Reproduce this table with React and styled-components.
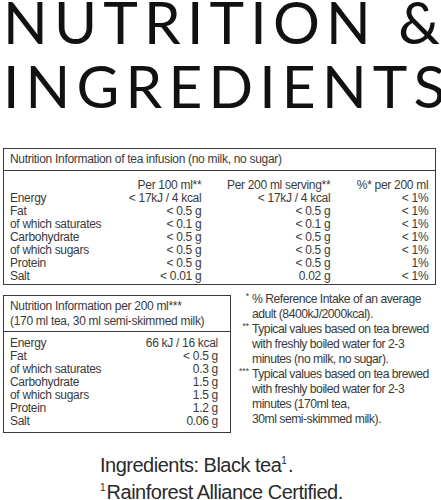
import React from "react";
import styled, { createGlobalStyle } from "styled-components";

const Global = createGlobalStyle`
  html, body { margin: 0; padding: 0; background: #fff; }
  body { font-family: "Liberation Sans", Arial, sans-serif; color: #2b2b2b; }
`;

const Page = styled.div`
  width: 441px;
  height: 500px;
  overflow: hidden;
  box-sizing: border-box;
  padding: 0 3px;
`;

const Title = styled.h1`
  margin: -11px 0 0;
  font-family: Lato, "Open Sans", sans-serif;
  font-weight: 400;
  font-size: 58.6px;
  line-height: 64px;
  color: #111;
  white-space: nowrap;
`;

const TitleLine = styled.span`
  display: block;
  width: max-content;
  letter-spacing: ${(p) => p.$ls}px;
  margin-right: -${(p) => p.$ls}px;
`;

const Box = styled.div`
  border: 1.5px solid #3a3a3a;
  box-sizing: border-box;
  flex: none;
  width: ${(p) => p.$w}px;
  margin-top: ${(p) => p.$mt}px;
  font-size: 12px;
  letter-spacing: -0.3px;
  color: #3a3a3a;
`;

const BoxHead = styled.div`
  border-bottom: 1.5px solid #3a3a3a;
  padding: ${(p) => p.$pad};
  line-height: ${(p) => p.$lh}px;
  white-space: nowrap;
`;

const Grid = styled.div`
  display: grid;
  grid-template-columns: ${(p) => p.$cols};
  padding: ${(p) => p.$pad};
  line-height: 13px;
`;

const Cell = styled.div`
  text-align: ${(p) => (p.$right ? "right" : "left")};
  white-space: nowrap;
`;

const Lower = styled.div`
  display: flex;
  align-items: flex-start;
  margin-top: 10px;
`;

const Notes = styled.div`
  flex: 1;
  margin-top: -3px;
  padding-left: 4px;
  font-size: 12.2px;
  letter-spacing: -0.5px;
  line-height: 15px;
  color: #3a3a3a;
`;

const Note = styled.div`
  display: grid;
  grid-template-columns: 14px 1fr;
  column-gap: 3px;
  white-space: nowrap;
`;

const Mark = styled.span`
  text-align: right;
  font-size: 8.5px;
  line-height: 15px;
  position: relative;
  top: -3px;
  letter-spacing: 0;
`;

const Ingredients = styled.div`
  margin-top: 19px;
  padding-left: 97px;
  font-size: 20px;
  line-height: 27px;
  color: #2a2a2a;
  letter-spacing: -0.5px;
`;

const Sup = styled.sup`
  font-size: 10px;
  vertical-align: 8px;
  line-height: 0;
  letter-spacing: 0;
  margin-right: 1px;
`;

const rows1 = [
  ["Energy", "< 17kJ / 4 kcal", "< 17kJ / 4 kcal", "< 1%"],
  ["Fat", "< 0.5 g", "< 0.5 g", "< 1%"],
  ["of which saturates", "< 0.1 g", "< 0.1 g", "< 1%"],
  ["Carbohydrate", "< 0.5 g", "< 0.5 g", "< 1%"],
  ["of which sugars", "< 0.5 g", "< 0.5 g", "< 1%"],
  ["Protein", "< 0.5 g", "< 0.5 g", "1%"],
  ["Salt", "< 0.01 g", "0.02 g", "< 1%"],
];

const rows2 = [
  ["Energy", "66 kJ / 16 kcal"],
  ["Fat", "< 0.5 g"],
  ["of which saturates", "0.3 g"],
  ["Carbohydrate", "1.5 g"],
  ["of which sugars", "1.5 g"],
  ["Protein", "1.2 g"],
  ["Salt", "0.06 g"],
];

export default function App() {
  return (
    <Page>
      <Global />
      <Title>
        <TitleLine $ls={6.2}>NUTRITION &amp;</TitleLine>
        <TitleLine $ls={6.2}>INGREDIENTS</TitleLine>
      </Title>
      <Box $w={433} $mt={31}>
        <BoxHead $pad="2px 6px 3px" $lh={16}>
          Nutrition Information of tea infusion (no milk, no sugar)
        </BoxHead>
        <Grid $cols="1fr 100px 129px 98px" $pad="8px 12px 1px 6px">
          <Cell />
          <Cell $right>Per 100 ml**</Cell>
          <Cell $right>Per 200 ml serving**</Cell>
          <Cell $right>%* per 200 ml</Cell>
          {rows1.map((r) =>
            r.map((c, i) => (
              <Cell key={r[0] + i} $right={i > 0}>
                {c}
              </Cell>
            ))
          )}
        </Grid>
      </Box>
      <Lower>
        <Box $w={228} $mt={0}>
          <BoxHead $pad="3px 6px 2px" $lh={15}>
            Nutrition Information per 200 ml***
            <br />
            (170 ml tea, 30 ml semi-skimmed milk)
          </BoxHead>
          <Grid $cols="1fr auto" $pad="5px 12px 4px 6px">
            {rows2.map((r) =>
              r.map((c, i) => (
                <Cell key={r[0] + i} $right={i > 0}>
                  {c}
                </Cell>
              ))
            )}
          </Grid>
        </Box>
        <Notes>
          <Note>
            <Mark>*</Mark>
            <span>
              % Reference Intake of an average
              <br />
              adult (8400kJ/2000kcal).
            </span>
          </Note>
          <Note>
            <Mark>**</Mark>
            <span>
              Typical values based on tea brewed
              <br />
              with freshly boiled water for 2-3
              <br />
              minutes (no milk, no sugar).
            </span>
          </Note>
          <Note>
            <Mark>***</Mark>
            <span>
              Typical values based on tea brewed
              <br />
              with freshly boiled water for 2-3
              <br />
              minutes (170ml tea,
              <br />
              30ml semi-skimmed milk).
            </span>
          </Note>
        </Notes>
      </Lower>
      <Ingredients>
        Ingredients: Black tea<Sup>1</Sup>.
        <br />
        <Sup>1</Sup>Rainforest Alliance Certified.
      </Ingredients>
    </Page>
  );
}
